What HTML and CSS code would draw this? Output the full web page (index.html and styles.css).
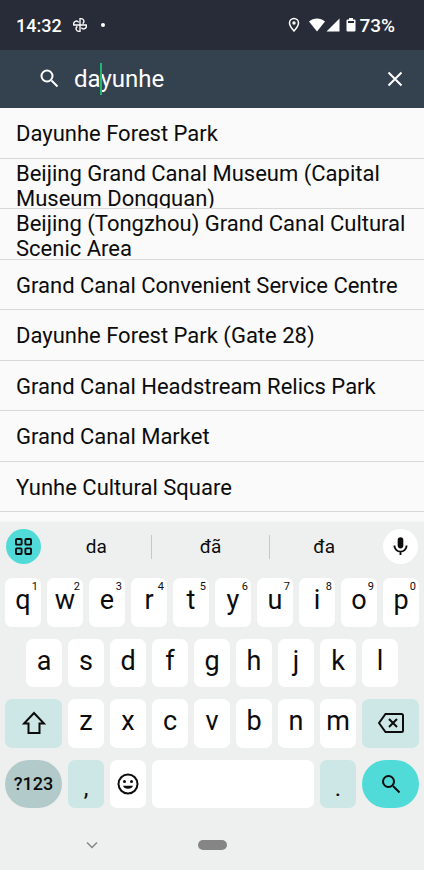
FILE: index.html
```html
<!DOCTYPE html>
<html lang="en">
<head>
<meta charset="utf-8">
<meta name="viewport" content="width=device-width, initial-scale=1">
<title>Place search</title>
<link rel="stylesheet" href="styles.css">
</head>
<body>
<header class="status">
  <time class="clock">14:32</time>
  <svg class="photos" viewBox="0 0 24 24" aria-hidden="true"><path d="M12 12V2.500c6-1 7.500 5 4 7.500M12 12h9.500c1 6-5 7.500-7.500 4M12 12v9.500c-6 1-7.500-5-4-7.500M12 12H2.500c-1-6 5-7.500 7.500-4"/></svg>
  <span class="dot"></span>
  <div class="indicators">
    <svg class="pin" viewBox="0 0 12 16" aria-hidden="true"><path d="M6 14C3.300 11 1.500 8.400 1.500 6a4.500 4.500 0 0 1 9 0c0 2.400-1.800 5-4.500 8z"/><circle class="solid" cx="6" cy="6" r="1.700"/></svg>
    <svg class="wifi" viewBox="0 0 16 14" aria-hidden="true"><path d="M0 3.500C4.500-.6 11.500-.6 16 3.500L8 13.500z"/></svg>
    <svg class="signal" viewBox="0 0 14 14" aria-hidden="true"><path d="M13.500.5v13H.5z"/></svg>
    <svg class="battery" viewBox="0 0 10 14" aria-hidden="true"><path fill-rule="evenodd" d="M3 0h4v1.500h1.500q1 0 1 1v10q0 1-1 1h-7q-1 0-1-1v-10q0-1 1-1H3zM2 3v2h6V3z"/></svg>
    <span class="percent">73%</span>
  </div>
</header>

<form class="search" role="search">
  <svg class="search-icon" viewBox="0 0 24 24" aria-hidden="true"><circle cx="9" cy="9" r="5.500"/><path d="M13.500 13.500l6 6"/></svg>
  <label class="field">
    <input type="text" value="dayunhe" aria-label="Search places">
    <span class="caret"></span>
  </label>
  <button class="clear" type="button" aria-label="Clear"><svg viewBox="0 0 16 16"><path d="M1.500 1.500l13 13M14.500 1.500l-13 13"/></svg></button>
</form>

<ul class="results">
  <li><a href="#">Dayunhe Forest Park</a></li>
  <li><a href="#">Beijing Grand Canal Museum (Capital Museum Dongguan)</a></li>
  <li><a href="#">Beijing (Tongzhou) Grand Canal Cultural Scenic Area</a></li>
  <li><a href="#">Grand Canal Convenient Service Centre</a></li>
  <li><a href="#">Dayunhe Forest Park (Gate 28)</a></li>
  <li><a href="#">Grand Canal Headstream Relics Park</a></li>
  <li><a href="#">Grand Canal Market</a></li>
  <li><a href="#">Yunhe Cultural Square</a></li>
</ul>

<section class="keyboard" aria-label="Keyboard">
  <div class="suggestions">
    <button class="round tools" aria-label="Tools"><svg viewBox="0 0 18 18"><rect x="1" y="1" width="6" height="6" rx="1"/><rect x="11" y="1" width="6" height="6" rx="1"/><rect x="1" y="11" width="6" height="6" rx="1"/><rect x="11" y="11" width="6" height="6" rx="1"/></svg></button>
    <div class="words">
      <button>da</button>
      <button>đã</button>
      <button>đa</button>
    </div>
    <button class="round mic" aria-label="Voice input"><svg viewBox="0 0 16 20"><rect class="solid" x="5" y="0" width="6" height="12" rx="3"/><path d="M1.500 9a6.500 6.500 0 0 0 13 0M8 15.500V19"/></svg></button>
  </div>

  <div class="keys">
    <div class="row">
      <button class="key">q<sup>1</sup></button>
      <button class="key">w<sup>2</sup></button>
      <button class="key">e<sup>3</sup></button>
      <button class="key">r<sup>4</sup></button>
      <button class="key">t<sup>5</sup></button>
      <button class="key">y<sup>6</sup></button>
      <button class="key">u<sup>7</sup></button>
      <button class="key">i<sup>8</sup></button>
      <button class="key">o<sup>9</sup></button>
      <button class="key">p<sup>0</sup></button>
    </div>
    <div class="row inset">
      <button class="key">a</button>
      <button class="key">s</button>
      <button class="key">d</button>
      <button class="key">f</button>
      <button class="key">g</button>
      <button class="key">h</button>
      <button class="key">j</button>
      <button class="key">k</button>
      <button class="key">l</button>
    </div>
    <div class="row">
      <button class="key wide tint" aria-label="Shift"><svg class="shift" viewBox="0 0 24 24"><path d="M12 2L2 12.500H6.500V22h11v-9.500h4.500z"/></svg></button>
      <button class="key">z</button>
      <button class="key">x</button>
      <button class="key">c</button>
      <button class="key">v</button>
      <button class="key">b</button>
      <button class="key">n</button>
      <button class="key">m</button>
      <button class="key wide tint" aria-label="Delete"><svg class="delete" viewBox="0 0 26 20"><path d="M7.500 1H23.500q1.500 0 1.500 1.500v15q0 1.500-1.500 1.500H7.500L1 10zM11 6l8 8M19 6l-8 8"/></svg></button>
    </div>
    <div class="row">
      <button class="key wide pill symbols">?123</button>
      <button class="key tint mark">,</button>
      <button class="key icon" aria-label="Emoji"><svg class="emoji" viewBox="0 0 22 22"><circle cx="11" cy="11" r="9.500"/><circle class="solid" cx="7.500" cy="8.500" r="1.500"/><circle class="solid" cx="14.500" cy="8.500" r="1.500"/><path class="solid" d="M6 12.800h10a5.200 4 0 0 1-10 0z"/></svg></button>
      <button class="key space" aria-label="Space"></button>
      <button class="key tint mark">.</button>
      <button class="key wide pill go" aria-label="Search"><svg class="find" viewBox="0 0 20 20"><circle cx="7.500" cy="7.500" r="5.500"/><path d="M12 12l6.500 6.500"/></svg></button>
    </div>
  </div>

  <nav class="system">
    <button class="hide" aria-label="Hide keyboard"><svg viewBox="0 0 12 8"><path d="M1 1.500l5 5 5-5"/></svg></button>
    <button class="home" aria-label="Home"></button>
  </nav>
</section>
</body>
</html>
```
FILE: styles.css
```css
* {
  box-sizing: border-box;
}

body {
  margin: 0;
  min-height: 100vh;
  display: flex;
  flex-direction: column;
  background: #fafafa;
  color: #0c0c0c;
  font-family: Roboto, "Liberation Sans", sans-serif;
}

button {
  border: 0;
  padding: 0;
  background: none;
  color: inherit;
  font: inherit;
}

svg {
  display: block;
  fill: none;
  stroke: currentColor;
  stroke-width: 2;
}

.solid {
  fill: currentColor;
  stroke: none;
}

/* Status bar */
.status {
  display: flex;
  align-items: center;
  height: 50px;
  padding: 0 29px 0 16px;
  background: #272c38;
  color: #fff;
  font-size: 18px;
  font-weight: 500;
}

.photos {
  width: 16px;
  height: 16px;
  margin-left: 10px;
}

.dot {
  width: 4px;
  height: 4px;
  margin-left: 13px;
  border-radius: 50%;
  background: #fff;
}

.indicators {
  display: flex;
  align-items: center;
  margin-left: auto;
}

.pin {
  width: 12px;
  height: 16px;
  margin-right: 9px;
  stroke-width: 1.5;
}

.wifi,
.signal,
.battery {
  height: 14px;
  fill: currentColor;
  stroke: none;
}

.wifi {
  width: 16px;
}

.signal {
  width: 14px;
  margin: 0 6px 0 1px;
}

.battery {
  width: 10px;
  margin-right: 3px;
}

.percent {
  font-size: 19px;
}

/* Search field */
.search {
  display: flex;
  align-items: center;
  height: 58px;
  padding: 0 20px 0 38px;
  background: #34414f;
  color: #fff;
}

.search-icon {
  width: 24px;
  height: 24px;
}

.field {
  position: relative;
  flex: 1;
  margin-left: 12px;
}

.field input {
  display: block;
  width: 100%;
  padding: 0;
  border: 0;
  outline: 0;
  background: none;
  color: inherit;
  font: inherit;
  font-size: 24px;
}

.caret {
  position: absolute;
  top: -2px;
  left: 26px;
  width: 2px;
  height: 32px;
  background: #1fb573;
}

.clear {
  width: 18px;
  height: 18px;
}

.clear svg {
  width: 16px;
  height: 16px;
  margin: auto;
}

/* Results */
.results {
  display: flex;
  flex: 1;
  flex-direction: column;
  margin: 0;
  padding: 0 0 10px;
  list-style: none;
}

.results li {
  display: flex;
  flex: 1 0 0;
  height: 50px;
  min-height: 0;
  border-bottom: 1px solid #d8d8d8;
  overflow: hidden;
}

.results a {
  display: flex;
  flex: 1;
  align-items: safe center;
  height: 100%;
  padding: 2px 8px 0 16px;
  color: inherit;
  font-size: 22px;
  line-height: 25px;
  text-decoration: none;
}

/* Keyboard */
.keyboard {
  display: flex;
  flex-direction: column;
  height: 348px;
  background: #eef0ef;
  box-shadow: 0 0 4px #eef0ef;
}

.suggestions {
  display: flex;
  align-items: center;
  height: 49px;
  padding: 0 6px;
}

.round {
  display: grid;
  place-items: center;
  width: 35px;
  height: 35px;
  border-radius: 50%;
}

.tools {
  background: #50dbd8;
}

.tools svg {
  width: 17px;
  height: 17px;
}

.mic {
  background: #fff;
}

.mic svg {
  width: 15px;
  height: 19px;
}

.words {
  display: grid;
  flex: 1;
  grid-template-columns: 11fr 12fr 11fr;
  margin: 0 5px 0 1px;
}

.words button {
  height: 24px;
  font-size: 19px;
}

.words button + button {
  border-left: 1px solid #c6c8c7;
}

.keys {
  display: grid;
  grid-template-rows: repeat(4, 1fr);
  gap: 12px;
  height: 230px;
  margin-top: 7px;
  padding: 0 2px;
}

.row {
  display: grid;
  grid-template-columns: repeat(20, 1fr);
}

.key {
  position: relative;
  grid-column: span 2;
  display: grid;
  place-items: center;
  margin: 0 3px;
  padding-bottom: 4px;
  border-radius: 7px;
  background: #fff;
  font-size: 27px;
  line-height: 32px;
}

.inset .key:first-child {
  grid-column: 2 / span 2;
}

.key sup {
  position: absolute;
  top: 3px;
  right: 3px;
  font-size: 11px;
  line-height: 12px;
}

.key.icon {
  padding: 0;
}

.key.wide {
  grid-column: span 3;
  padding: 0;
}

.key.space {
  grid-column: span 8;
}

.key.tint {
  background: #cce7e6;
}

.key.pill {
  border-radius: 24px;
}

.key.symbols {
  background: #b2cbca;
  font-size: 18px;
  font-weight: 500;
}

.key.mark {
  align-items: end;
  font-size: 24px;
}

.key.go {
  background: #50dbd8;
}

.shift {
  width: 24px;
  height: 24px;
}

.delete {
  width: 26px;
  height: 20px;
}

.emoji {
  width: 22px;
  height: 22px;
}

.find {
  width: 20px;
  height: 20px;
}

/* System navigation */
.system {
  display: grid;
  flex: 1;
  grid-template-columns: 1fr auto 1fr;
  place-items: center;
  padding-top: 12px;
  color: #858585;
}

.hide {
  margin-right: 14px;
}

.hide svg {
  width: 12px;
  height: 8px;
  stroke-width: 1.5;
}

.home {
  width: 29px;
  height: 10px;
  border-radius: 5px;
  background: #858585;
}
```
